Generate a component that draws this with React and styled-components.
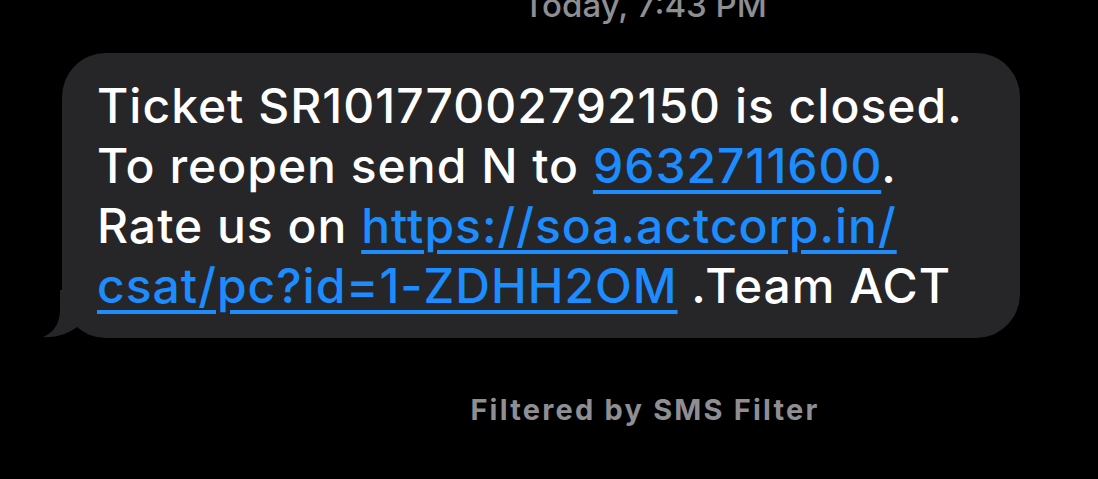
import React from 'react';
import styled, { createGlobalStyle } from 'styled-components';

const GlobalStyle = createGlobalStyle`
  html, body {
    margin: 0;
    padding: 0;
    background: #000;
  }
  body {
    font-family: Inter, "Liberation Sans", Arial, sans-serif;
    -webkit-font-smoothing: antialiased;
  }
`;

const Screen = styled.main`
  width: 1098px;
  height: 479px;
  overflow: hidden;
  background: #000;
  display: flex;
  flex-direction: column;
`;

const Stamp = styled.div`
  margin-top: -14px;
  height: 38px;
  text-align: center;
  padding-left: 192px;
  font-size: 33px;
  font-weight: 500;
  color: #8e8e93;
  line-height: 38px;
  white-space: nowrap;
`;

const Row = styled.div`
  padding-left: 62px;
  margin-top: 29px;
`;

const Bubble = styled.div`
  position: relative;
  width: 958px;
  height: 285px;
  box-sizing: border-box;
  background: #262629;
  border-radius: 44px;
  padding: 22.5px 30px 0 35px;
  color: #fff;
  font-size: 48px;
  font-weight: 500;
  line-height: 60px;
  letter-spacing: 1px;
  white-space: nowrap;
`;

const Line = styled.div`
  position: relative;
`;

const Link = styled.a`
  color: #1c8cff;
  text-decoration: underline;
  text-decoration-thickness: 3.5px;
  text-underline-offset: 7px;
`;

const Tail = styled.svg`
  position: absolute;
  left: -19px;
  bottom: 0;
  width: 50px;
  height: 48px;
`;

const Note = styled.div`
  margin-top: 54px;
  text-align: center;
  padding-left: 192px;
  font-size: 29px;
  font-weight: 700;
  line-height: 36px;
  color: #8e8e93;
  letter-spacing: 2.2px;
`;

export default function App() {
  return (
    <Screen>
      <GlobalStyle />
      <Stamp>Today, 7:43 PM</Stamp>
      <Row>
        <Bubble>
          <Tail viewBox="0 0 50 48">
            <path
              d="M17 0 L17 20 C17 34 10 43 0 47 C12 48 25 44 34 37 L50 20 L50 0 Z"
              fill="#262629"
            />
          </Tail>
          <Line>Ticket SR10177002792150 is closed.</Line>
          <Line>
            To reopen send N to <Link>9632711600</Link>.
          </Line>
          <Line>
            Rate us on <Link>https://soa.actcorp.in/</Link>
          </Line>
          <Line>
            <Link>csat/pc?id=1-ZDHH2OM</Link> .Team ACT
          </Line>
        </Bubble>
      </Row>
      <Note>Filtered by SMS Filter</Note>
    </Screen>
  );
}
